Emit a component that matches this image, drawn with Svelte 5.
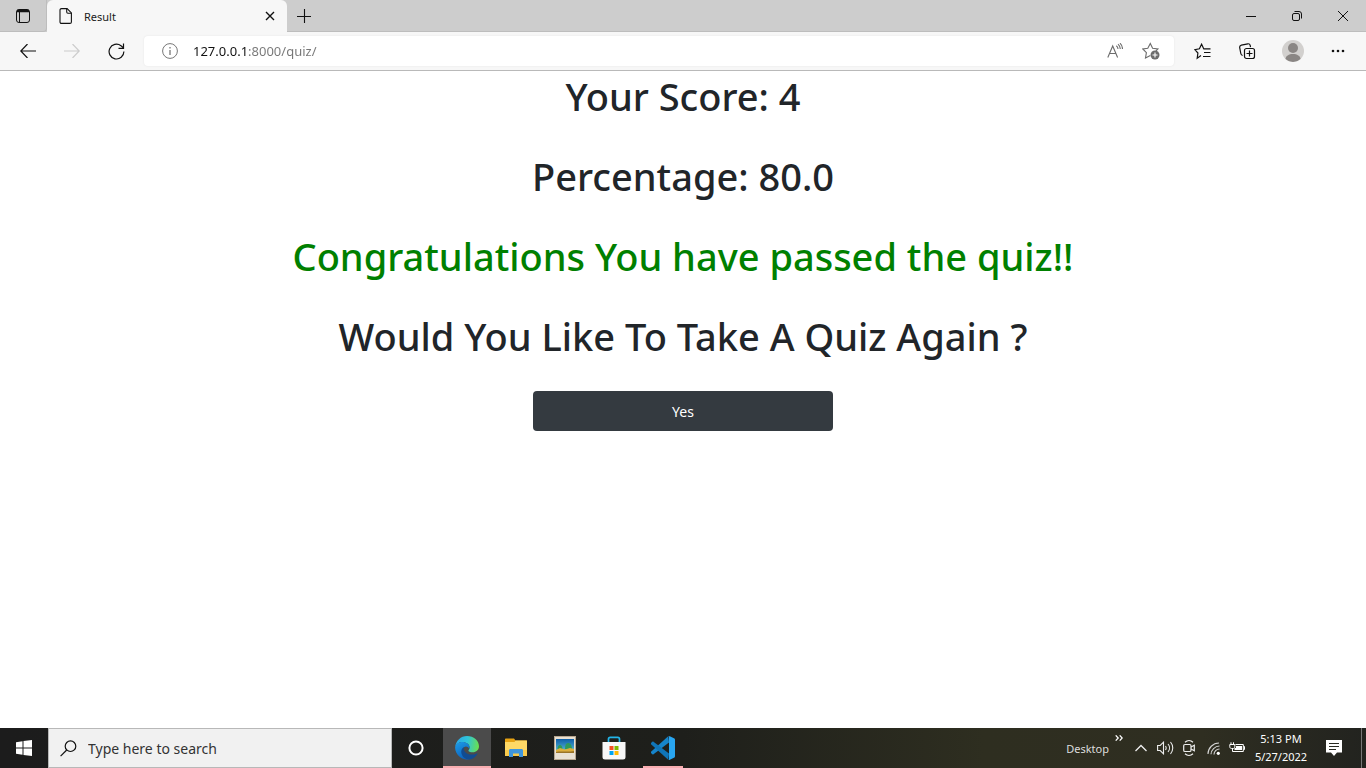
<script>
  let address = $state('127.0.0.1:8000/quiz/');
  let query = $state('');
  const score = 4;
  const percentage = '80.0';
</script>

<div class="screen">
  <header>
    <div class="tabstrip">
      <button class="tool tabmenu" aria-label="Tab actions">
        <svg width="16" height="16" viewBox="0 0 16 16" fill="none" stroke="#111">
          <rect x="1.5" y="1.5" width="13" height="13" rx="2.5" />
          <path d="M2 3.5h12M2 2.5h12" stroke-width="1.4" />
          <path d="M4.5 4v10" />
        </svg>
      </button>
      <div class="tab">
        <svg width="14" height="16" viewBox="0 0 14 16" fill="none" stroke="#111" stroke-width="1.1">
          <path d="M2.5.6h5.6l4.3 4.3v9c0 .9-.6 1.5-1.5 1.5H2.5C1.600 15.400 1 14.800 1 13.900V2.100C1 1.200 1.600.6 2.500.6z" />
          <path d="M7.700.8v3.300c0 .7.500 1.200 1.200 1.200h3.400" />
        </svg>
        <span class="title">Result</span>
        <button class="close" aria-label="Close tab">
          <svg width="10" height="10" viewBox="0 0 10 10" stroke="#111" stroke-width="1.4"><path d="M1 1l8 8M9 1L1 9" /></svg>
        </button>
      </div>
      <button class="newtab" aria-label="New tab">
        <svg width="14" height="14" viewBox="0 0 14 14" stroke="#111" stroke-width="1.1"><path d="M7.500 0v14M0 7.500h14" /></svg>
      </button>
      <div class="window">
        <button aria-label="Minimize"><svg width="10" height="10" viewBox="0 0 10 10" stroke="#111"><path d="M0 5.500h10" /></svg></button>
        <button aria-label="Restore">
          <svg width="10" height="10" viewBox="0 0 10 10" fill="none" stroke="#111">
            <rect x=".5" y="2.500" width="7" height="7" rx="1.500" />
            <path d="M2.500.5h4.500a2.500 2.500 0 0 1 2.500 2.500v4.500" />
          </svg>
        </button>
        <button aria-label="Close"><svg width="10" height="10" viewBox="0 0 10 10" stroke="#111"><path d="M0 0l10 10M10 0L0 10" /></svg></button>
      </div>
    </div>

    <div class="toolbar">
      <div class="nav">
        <button class="tool" aria-label="Back">
          <svg width="16" height="14" viewBox="0 0 16 14" fill="none" stroke="#111" stroke-width="1.200"><path d="M7.500 0L.8 7l6.700 7M.8 7H16" /></svg>
        </button>
        <button class="tool" aria-label="Forward" disabled>
          <svg width="16" height="14" viewBox="0 0 16 14" fill="none" stroke="#ccc" stroke-width="1.200"><path d="M8.500 0l6.700 7-6.700 7M15.200 7H0" /></svg>
        </button>
        <button class="tool" aria-label="Refresh">
          <svg width="17" height="17" viewBox="0 0 17 17" fill="none" stroke="#111" stroke-width="1.200"><path d="M15.900 8.500A7.400 7.400 0 1 1 13 2.700l2.500 2.200M15.500.4v4.900h-5" /></svg>
        </button>
      </div>
      <div class="address">
        <button class="info" aria-label="Site information">
          <svg width="16" height="16" viewBox="0 0 16 16" fill="none" stroke="#777"><circle cx="8" cy="8" r="7.400" /><path d="M8 7v5M8 4v1.400" stroke-width="1.300" /></svg>
        </button>
        <input aria-label="Address" spellcheck="false" bind:value={address} />
        <button class="small" aria-label="Read aloud">
          <svg width="16" height="16" viewBox="0 0 16 16" fill="none" stroke="#6c6c6c" stroke-width="1.100"><path d="M.8 14.500L5.700 3l4.900 11.500M2.500 10.500h6.400M9.300 2.800c1.200.9 1.700 1.900 1.700 3.200M11 1.200c1.500 1.300 2.200 2.800 2.300 4.800M13 .2c1.800 1.700 2.500 3.600 2.500 5.800" /></svg>
        </button>
        <button class="small" aria-label="Add to favorites">
          <svg width="18" height="18" viewBox="0 0 18 18" fill="none" stroke="#6c6c6c" stroke-width="1.100">
            <path d="M8.300 13.500l-4.800 2.400.9-5.200L.8 7l5-.8L8.300 1.500l2.300 4.700 5.300.8-2 2" />
            <circle cx="13" cy="13" r="4.500" fill="#6c6c6c" stroke="none" />
            <path d="M13 10.500v5M10.500 13h5" stroke="#fff" />
          </svg>
        </button>
      </div>
      <div class="actions">
        <button aria-label="Favorites">
          <svg width="17" height="17" viewBox="0 0 17 17" fill="none" stroke="#111" stroke-width="1.200">
            <path d="M7 12.500l-3.800 2.700.7-5.200L.8 6.600l4.600-.8L7.600 1.200l2.200 4.700h6.700M10 9.500h6.500M9 13.500h7.500" />
          </svg>
        </button>
        <button aria-label="Collections">
          <svg width="17" height="17" viewBox="0 0 17 17" fill="none" stroke="#111" stroke-width="1.200">
            <path d="M3.600 12.500C2.500 12 2 11.500 1.800 10.500L.7 4.600C.5 3.300 1.200 2.500 2.400 2.200L8.800.8c1.300-.2 2.100.4 2.400 1.600l.3 1.800" />
            <rect x="5.500" y="5.500" width="10" height="10" rx="2" fill="#f7f7f7" />
            <path d="M10.500 7.500v6M7.500 10.500h6" />
          </svg>
        </button>
        <button aria-label="Profile">
          <svg width="22" height="22" viewBox="0 0 22 22">
            <circle cx="11" cy="11" r="11" fill="#d2d0ce" />
            <circle cx="11" cy="8" r="5" fill="#8a8684" />
            <path d="M3.500 19c0-3 3.500-5 7.500-5s7.500 2 7.500 5a11 11 0 0 1-15 0z" fill="#8a8684" />
          </svg>
        </button>
        <button aria-label="Settings and more">
          <svg width="14" height="4" viewBox="0 0 14 4" fill="#111"><circle cx="2" cy="2" r="1.300" /><circle cx="7" cy="2" r="1.300" /><circle cx="12" cy="2" r="1.300" /></svg>
        </button>
      </div>
    </div>
  </header>

  <main>
    <h1>Your Score: {score}</h1>
    <h1>Percentage: {percentage}</h1>
    <h1 class="passed">Congratulations You have passed the quiz!!</h1>
    <h1>Would You Like To Take A Quiz Again ?</h1>
    <button class="again">Yes</button>
  </main>

  <footer>
    <button class="start" aria-label="Start">
      <svg width="16" height="16" viewBox="0 0 16 16" fill="#fff"><path d="M0 2.200L6.500 1.300v6.200H0zM7.500 1.100L16 0v7.500H7.500zM0 8.500h6.500v6.200L0 13.800zM7.500 8.500H16V16l-8.500-1.100z" /></svg>
    </button>
    <label class="search">
      <svg width="17" height="17" viewBox="0 0 17 17" fill="none" stroke="#111" stroke-width="1.200"><circle cx="10.500" cy="6.200" r="5.300" /><path d="M6.700 10L.6 16.200" /></svg>
      <input aria-label="Search" placeholder="Type here to search" bind:value={query} />
    </label>
    <div class="apps">
      <button class="cortana" aria-label="Cortana">
        <svg width="16" height="16" viewBox="0 0 16 16" fill="none" stroke="#fff" stroke-width="2"><circle cx="8" cy="8" r="6.600" /></svg>
      </button>
      <button class="active" aria-label="Microsoft Edge">
        <svg width="24" height="24" viewBox="0 0 24 24">
          <defs>
            <linearGradient id="edgeTop" x1="0" y1=".4" x2="1" y2=".5"><stop offset="0" stop-color="#2aa6e8" /><stop offset=".5" stop-color="#2fc4d9" /><stop offset="1" stop-color="#6be04c" /></linearGradient>
            <linearGradient id="edgeLeft" x1="0" y1="0" x2=".5" y2="1"><stop offset="0" stop-color="#1d9de8" /><stop offset="1" stop-color="#0c62bd" /></linearGradient>
          </defs>
          <path d="M.2 11C.8 4.800 5.800 0 12 0c6.800 0 12 4.800 12 10.300 0 3.600-2.800 6-6.200 6-2.800 0-4.400-.9-4.400-1.800 0-.6 1.200-1.200 1.200-3.100 0-2.900-3.300-5.300-7.200-5.300C3.800 6.100 1.300 8.200.2 11z" fill="url(#edgeTop)" />
          <path d="M.1 11.500C.7 8.200 3.800 6 7.300 6c4 0 7.200 2.300 7.200 5.200 0 .6-.1 1.100-.3 1.500-.8-1.500-2-2.200-3.300-2.200-2.400 0-3.600 2.300-3.600 4.800 0 4 3.200 7.500 8.200 7.700A12 12 0 0 1 .1 11.500z" fill="url(#edgeLeft)" />
          <path d="M9.400 10.900c-2.700 1.200-3.600 3.700-3 6.300.9 4.300 5.200 6.800 9.300 6.100 3-1 5.300-2.700 6.700-5.400.3-.5-.1-.8-.6-.5-4.600 2.200-10.600 1.300-12.400-2.500-.7-1.500-.7-2.900 0-4z" fill="#124c91" />
        </svg>
      </button>
      <button aria-label="File Explorer">
        <svg width="22" height="20" viewBox="0 0 22 20">
          <path d="M0 1.500C0 .7.400.5 1 .5h8l1.500 2H21c.6 0 1 .4 1 1V8H0z" fill="#e8a313" />
          <path d="M0 4h9.500l1-1.500H22V18H0z" fill="#ffd966" />
          <path d="M0 12h22v6H0z" fill="#f8ca4c" />
          <path d="M4 12.500c0-1 .6-1.500 1.500-1.500h11c.9 0 1.500.5 1.500 1.500V19h-4v-3.500H8V19H4z" fill="#3f96dc" />
        </svg>
      </button>
      <button aria-label="Photo gallery">
        <svg width="22" height="24" viewBox="0 0 22 24">
          <defs>
            <linearGradient id="sky" x1="0" y1="0" x2="0" y2="1"><stop offset="0" stop-color="#0d5ea8" /><stop offset="1" stop-color="#63c6dc" /></linearGradient>
          </defs>
          <rect x=".5" y=".5" width="21" height="23" fill="#e9e1d3" stroke="#b8a891" />
          <path d="M2 3h18v14H2z" fill="url(#sky)" />
          <path d="M3.500 13c0-2 1-4 2.500-4s2.500 2 2.500 4zM11 13c0-4 1-6 3-6s4 2 4 6z" fill="#2f9a5a" />
          <path d="M2 14l4-2 5 1.500 5-1.500 4 1v4H2z" fill="#dcae3c" />
          <path d="M2 16c6-1.500 10 .5 18-1v2H2z" fill="#9a7428" />
        </svg>
      </button>
      <button aria-label="Microsoft Store">
        <svg width="24" height="24" viewBox="0 0 24 24">
          <path d="M6.500 6V3c0-1.100.6-1.700 1.700-1.700h7.600c1.100 0 1.700.6 1.700 1.700v3" fill="none" stroke="#23b5e8" stroke-width="1.700" />
          <path d="M.5 6h23v15a2.500 2.500 0 0 1-2.500 2.500H3A2.500 2.500 0 0 1 .5 21z" fill="#f7f7f7" />
          <path d="M7.500 10h4v4h-4z" fill="#f25022" /><path d="M12.500 10h4v4h-4z" fill="#7fba00" />
          <path d="M7.500 15h4v4h-4z" fill="#00a4ef" /><path d="M12.500 15h4v4h-4z" fill="#ffb900" />
        </svg>
      </button>
      <button class="running" aria-label="Visual Studio Code">
        <svg width="24" height="24" viewBox="0 0 24 24">
          <path d="M17.200.3L0 15.700c-.4.400-.4.900 0 1.300l1.300 1.200c.4.300.8.300 1.200 0L18 6.400z" fill="#1684ca" />
          <path d="M17.200 23.700L0 8.300c-.4-.4-.4-.9 0-1.300l1.300-1.200c.4-.3.800-.3 1.200 0L18 17.600z" fill="#1075b8" />
          <path d="M17.300 23.800c.5.200 1 .2 1.500-.1l4.200-2c.6-.3 1-.8 1-1.500V3.800c0-.7-.4-1.200-1-1.500l-4.200-2c-.6-.3-1.200-.2-1.700.2.5-.3.900 0 .9.700v21.600c0 .7-.3 1-.7 1z" fill="#29a6f1" />
        </svg>
      </button>
    </div>

    <div class="tray">
      <span class="desktop">Desktop</span>
      <button class="more" aria-label="More desktop items">
        <svg width="8" height="6" viewBox="0 0 8 6" fill="none" stroke="#fff" stroke-width="1.300"><path d="M.7.400L3.200 3 .7 5.600M4.700.4L7.200 3 4.700 5.600" /></svg>
      </button>
      <button aria-label="Show hidden icons">
        <svg width="12" height="8" viewBox="0 0 12 8" fill="none" stroke="#eee" stroke-width="1.300"><path d="M.5 7L6 1.500 11.500 7" /></svg>
      </button>
      <button aria-label="Volume">
        <svg width="17" height="14" viewBox="0 0 17 14" fill="none" stroke="#eee" stroke-width="1.100"><path d="M.6 4.500h2.600L6.500 1.200v11.600L3.200 9.500H.6zM8.500 5c.8 1.200.8 2.800 0 4M11 3c2 2.300 2 5.700 0 8M13.500 1c3 3.500 3 8.500 0 12" /></svg>
      </button>
      <button aria-label="Meet now">
        <svg width="12" height="16" viewBox="0 0 12 16" fill="none" stroke="#eee" stroke-width="1.200"><rect x=".7" y="4.500" width="7.300" height="7" rx="1.300" /><path d="M8 7l3.300-1.700v5.400L8 9M2 2.200c2.300-2 5.700-2 8 0M2 13.800c2.300 2 5.700 2 8 0" /></svg>
      </button>
      <button aria-label="Network">
        <svg width="13" height="13" viewBox="0 0 13 13" fill="none" stroke="#d5d5d5" stroke-width="1.100"><path d="M1 12C1 6 6 1 12 1M4 12.300C4 8 8 4 12.500 4M7 12.500C7 9.500 9.500 7 12.500 7" /><circle cx="11.300" cy="11.300" r="1.600" fill="#fff" stroke="none" /></svg>
      </button>
      <button aria-label="Battery">
        <svg width="16" height="12" viewBox="0 0 16 12" fill="none" stroke="#fff"><path d="M6.500 2.500h7.800v7H3.500V8M14.500 4.500h1v3h-1" /><path d="M7 4h6v4H5.500V6H7z" fill="#fff" stroke="none" /><path d="M.8 2.500h5v2.300c0 1-.7 1.700-1.700 1.700H2.500C1.500 6.500.8 5.800.8 4.800zM2 .3v2M4.500.3v2M3.500 6.500V9" /></svg>
      </button>
      <button class="clock"><span>5:13 PM</span><span>5/27/2022</span></button>
      <button class="notes" aria-label="Notifications">
        <svg width="16" height="16" viewBox="0 0 16 16"><path d="M0 0h16v12.500h-5L8 16l-3-3.500H0z" fill="#fff" /><path d="M3 3.500h10M3 6.500h10M3 9.500h7" stroke="#292a22" /></svg>
      </button>
      <button class="peek" aria-label="Show desktop"></button>
    </div>
  </footer>
</div>

<style>
  :global(body) { background: #fff; }
  :global(*) { box-sizing: border-box; }

  .screen {
    display: flex;
    flex-direction: column;
    min-height: 100vh;
    font-family: "Segoe UI", "Noto Sans", sans-serif;
    font-size: 12px;
    color: #1b1b1b;
  }
  button {
    display: flex;
    align-items: center;
    justify-content: center;
    padding: 0;
    border: 0;
    background: none;
    color: inherit;
    font: inherit;
  }
  svg { display: block; flex: none; }
  input { min-width: 0; border: 0; outline: 0; padding: 0; background: none; font: inherit; }

  .tabstrip { display: flex; height: 32px; background: #cdcdcd; }
  .tool { width: 44px; height: 32px; }
  .tabmenu { width: 47px; border-bottom: 1px solid #bdbdbd; border-right: 1px solid #bdbdbd; border-radius: 0 0 4px 0; }
  .tab {
    display: flex;
    align-items: center;
    gap: 11px;
    width: 240px;
    padding: 0 10px 0 12px;
    border-radius: 6px 6px 0 0;
    background: #f7f7f7;
  }
  .title { flex: 1; font-size: 11px; }
  .close { width: 14px; height: 20px; }
  .newtab { width: 34px; border-bottom: 1px solid #bdbdbd; }
  .window { display: flex; flex: 1; justify-content: flex-end; border-bottom: 1px solid #bdbdbd; }
  .window button { width: 46px; }

  .toolbar {
    display: flex;
    align-items: center;
    height: 39px;
    background: #f7f7f7;
    border-bottom: 1px solid #b9b9b9;
  }
  .nav { display: flex; padding: 0 6px; }
  .address {
    display: flex;
    align-items: center;
    flex: 1;
    height: 30px;
    padding: 0 14px 0 18px;
    border-radius: 4px;
    background: #fff;
    box-shadow: 0 0 2px #e2e2e2;
  }
  .info { width: 16px; }
  .address input {
    flex: 1;
    height: 24px;
    margin: 0 12px 0 15px;
    font-size: 13px;
    color: #767676;
    background: linear-gradient(to right, #111 54px, #767676 54px);
    -webkit-background-clip: text;
    background-clip: text;
    -webkit-text-fill-color: transparent;
  }
  .small { width: 18px; height: 24px; }
  .small + .small { margin-left: 18px; }
  .actions { display: flex; padding: 0 6px; }
  .actions button { width: 45px; height: 32px; }

  main { display: flex; flex: 1; flex-direction: column; align-items: center; }
  h1 {
    margin: 0 0 30px;
    color: #212529;
    font-size: 38px;
    font-weight: 500;
    line-height: 50px;
    text-align: center;
  }
  .passed { color: #008000; }
  .again {
    width: 300px;
    max-width: 100%;
    height: 40px;
    border-radius: 4px;
    background: #343a40;
    color: #fff;
    font-size: 14px;
  }

  footer {
    display: flex;
    height: 40px;
    background: linear-gradient(to right, #1c1c1c 0%, #1e1f1b 50%, #2e2e20 72%, #2f2e21 88%, #22231f 100%);
    color: #fff;
  }
  .start { width: 48px; }
  .search {
    display: flex;
    align-items: center;
    gap: 11px;
    width: 344px;
    padding: 0 11px;
    border: 1px solid #b8b8b8;
    background: #f1f1f1;
  }
  .search input { flex: 1; font-size: 14px; color: #333; }
  .search input::placeholder { color: #333; opacity: 1; }
  .apps { display: flex; gap: 1px; }
  .apps button { width: 48px; }
  .apps .cortana { margin-right: 2px; }
  .apps .active { background: #4b4b4b; box-shadow: inset 0 -2px #f8adb0; }
  .apps .running { background: linear-gradient(#f8adb0, #f8adb0) center bottom / 40px 2px no-repeat; }
  .tray { display: flex; flex: 1; justify-content: flex-end; }
  .tray button { width: 24px; }
  .desktop { align-self: center; font-size: 11px; color: #ddd; }
  .tray .more { align-items: flex-start; width: 20px; padding-top: 7px; }
  .tray .clock { flex-direction: column; width: 64px; font-size: 11px; line-height: 18px; }
  .tray .notes { width: 42px; }
  .tray .peek { width: 5px; margin-left: 6px; border-left: 1px solid #777; }
</style>
